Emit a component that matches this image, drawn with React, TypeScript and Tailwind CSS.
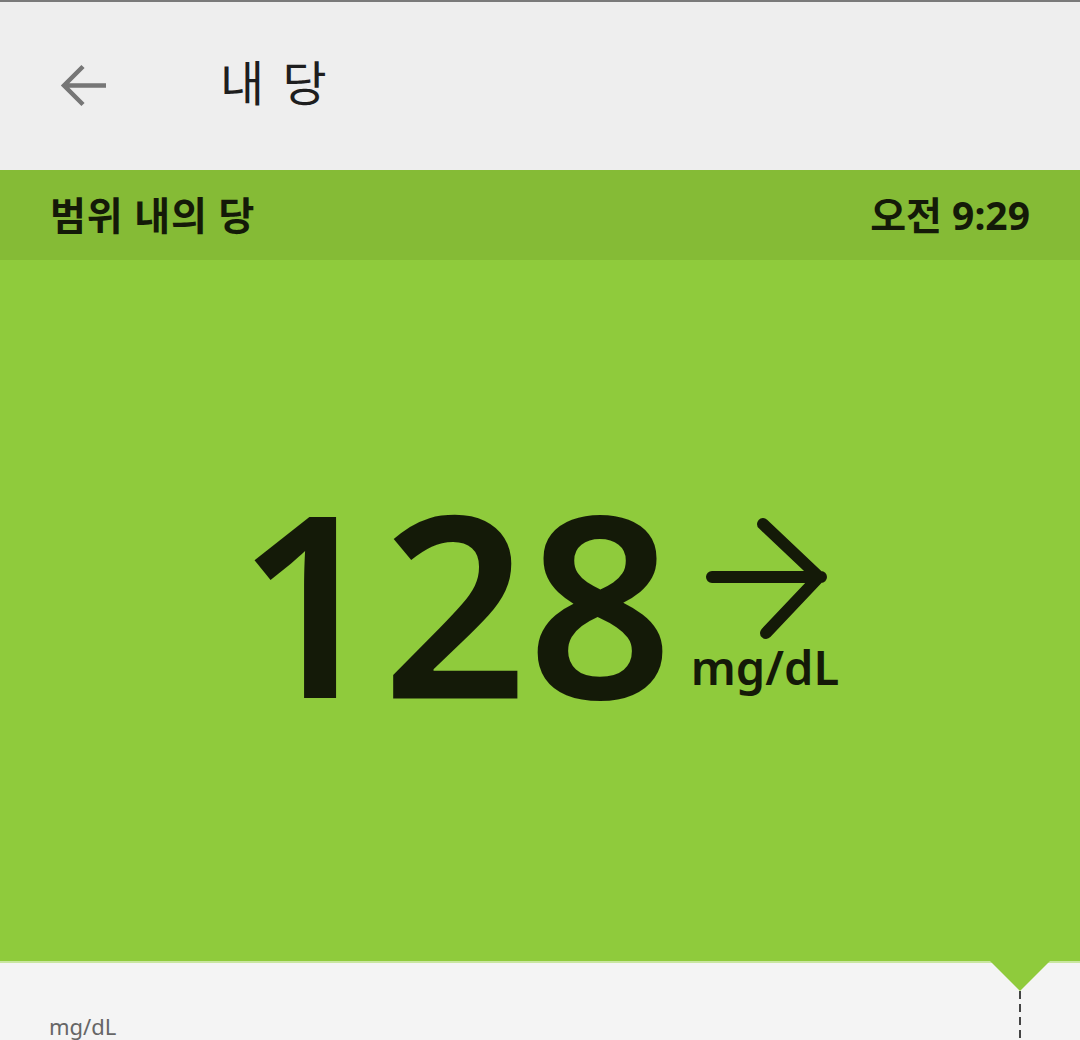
import React from 'react';

const sans = { fontFamily: '"Noto Sans", "Noto Sans CJK KR", sans-serif' };

function BackArrow() {
  return (
    <svg viewBox="0 0 48 48" className="w-[48px] h-[48px]" fill="none">
      <path d="M46 23.5H6M23 4.5L4 23.5l19 19" stroke="#767676" strokeWidth="4.5" strokeLinecap="butt" strokeLinejoin="miter" />
    </svg>
  );
}

function TrendArrow() {
  return (
    <svg viewBox="0 0 124 124" className="w-[124px] h-[124px]" fill="none">
      <path d="M7 59h109M58 6l56 53-53 56" stroke="#141a08" strokeWidth="12" strokeLinecap="round" strokeLinejoin="round" />
    </svg>
  );
}

export default function App() {
  return (
    <div className="w-[1080px] h-[1040px] overflow-hidden bg-[#f4f4f4] flex flex-col" style={sans}>
      <div className="h-[2px] bg-[#7a7a7a]" />
      {/* app bar */}
      <div className="h-[168px] bg-[#eeeeee] flex items-center">
        <div className="ml-[60px] mt-[-1px] flex items-center">
          <BackArrow />
        </div>
        <h1 className="ml-[112px] text-[48px] leading-none text-[#1e1e1e] tracking-[0.06em] mb-[6px]">내 당</h1>
      </div>
      {/* status bar */}
      <div className="h-[90px] bg-[#85bb36] flex items-center justify-between px-[50px] text-[#141a08] font-bold text-[39px]">
        <span className="tracking-[0.02em]">범위 내의 당</span>
        <span>오전 9:29</span>
      </div>
      {/* reading */}
      <div className="h-[703px] bg-[#8fcb3c] flex items-center justify-center relative">
        <div className="flex items-start mt-[-26px] ml-[-4px]">
          <span className="text-[254px] leading-none font-semibold text-[#141a08] tracking-[0em]">128</span>
          <div className="flex flex-col items-start ml-[32px] mt-[46px]">
            <TrendArrow />
            <span className="text-[47px] leading-none font-semibold text-[#141a08] mt-[2px] ml-[-14px]">mg/dL</span>
          </div>
        </div>
        <div className="absolute left-0 right-0 bottom-0 h-[2px] bg-[#c9e6a0]" />
      </div>
      {/* chart area */}
      <div className="flex-1 relative">
        <svg className="absolute left-[988px] top-[-2px]" width="64" height="80" viewBox="0 0 64 80">
          <path d="M2 0h60L32 30z" fill="#8fcb3c" />
          <path d="M32 30v50" stroke="#444" strokeWidth="2" strokeDasharray="8 5" />
        </svg>
        <span className="absolute left-[49px] top-[52px] text-[22px] text-[#666] leading-none">mg/dL</span>
      </div>
    </div>
  );
}
